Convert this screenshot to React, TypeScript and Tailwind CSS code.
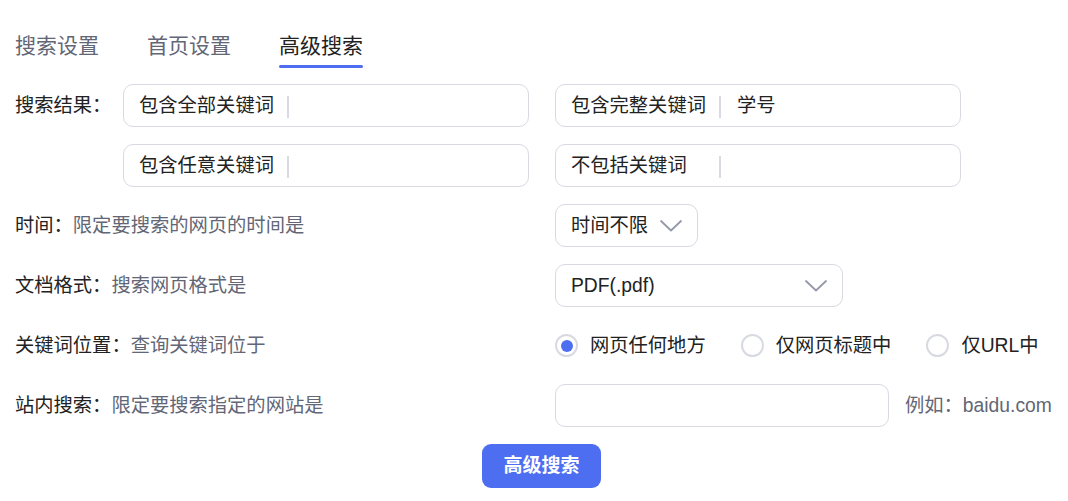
import { useState } from 'react';

const TABS = ['搜索设置', '首页设置', '高级搜索'];

function Chevron() {
  return (
    <svg width="24" height="14" viewBox="0 0 24 14" fill="none" className="shrink-0">
      <path d="M2 2l10 9.5L22 2" stroke="#9599a8" strokeWidth="1.8" strokeLinecap="round" strokeLinejoin="round" />
    </svg>
  );
}

function KeywordInput({ label, value }: { label: string; value?: string }) {
  return (
    <div className="flex h-[43px] items-center rounded-[10px] border border-[#d8dae1] bg-white pl-[15px] pt-[2px]">
      <span className="w-[148px] shrink-0 text-[#222]">{label}</span>
      <span className="h-[22px] w-[2px] shrink-0 bg-[#d8dae1]" />
      <span className="pl-[16px] text-[#222]">{value}</span>
    </div>
  );
}

function Label({ title, desc }: { title: string; desc?: string }) {
  return (
    <div className="col-span-2 flex items-center whitespace-nowrap pt-[2px]">
      <span className="text-[#222]">{title}</span>
      {desc && <span className="text-[#626675]">{desc}</span>}
    </div>
  );
}

function Radio({ label, checked, onClick }: { label: string; checked: boolean; onClick: () => void }) {
  return (
    <button type="button" onClick={onClick} className="flex items-center gap-[12px]">
      <span className="flex h-[23px] w-[23px] items-center justify-center rounded-full border-2 border-[#d8dae1] bg-white">
        {checked && <span className="h-[12px] w-[12px] rounded-full bg-[#4e6ef2]" />}
      </span>
      <span className="pt-[2px] text-[#222]">{label}</span>
    </button>
  );
}

export default function App() {
  const [tab, setTab] = useState(2);
  const [pos, setPos] = useState(0);

  return (
    <div
      className="min-h-screen w-[1068px] bg-white pl-[15px] text-[19.3px]"
      style={{ fontFamily: '"Liberation Sans", "Noto Sans CJK SC", sans-serif' }}
    >
      {/* Tabs */}
      <div className="flex gap-[48px] pt-[31px]">
        {TABS.map((t, i) => (
          <button key={t} type="button" onClick={() => setTab(i)} className="flex flex-col items-stretch">
            <span className={`text-[21px] leading-[30px] ${i === tab ? 'text-[#222]' : 'text-[#626675]'}`}>{t}</span>
            <span className={`mt-[4px] h-[3px] rounded-full ${i === tab ? 'bg-[#4e6ef2]' : 'bg-transparent'}`} />
          </button>
        ))}
      </div>

      {/* Form */}
      <div className="mt-[16px] grid grid-cols-[82px_406px_406px] grid-rows-[repeat(6,43px)] gap-x-[26px] gap-y-[17px]">
        <div className="flex items-center whitespace-nowrap pt-[1px] text-[#222]">搜索结果：</div>
        <KeywordInput label="包含全部关键词" />
        <KeywordInput label="包含完整关键词" value="学号" />

        <div />
        <KeywordInput label="包含任意关键词" />
        <KeywordInput label="不包括关键词" />

        <Label title="时间：" desc="限定要搜索的网页的时间是" />
        <div className="flex">
          <div className="flex h-[43px] w-[143px] items-center justify-between rounded-[10px] border border-[#d8dae1] pl-[15px] pr-[14px] text-[#222]">
            <span className="pt-[2px]">时间不限</span>
            <Chevron />
          </div>
        </div>

        <Label title="文档格式：" desc="搜索网页格式是" />
        <div className="flex">
          <div className="flex h-[43px] w-[288px] items-center justify-between rounded-[10px] border border-[#d8dae1] pl-[15px] pr-[14px] text-[#222]">
            <span className="pt-[2px]">PDF(.pdf)</span>
            <Chevron />
          </div>
        </div>

        <Label title="关键词位置：" desc="查询关键词位于" />
        <div className="flex items-center gap-[35px] whitespace-nowrap">
          {['网页任何地方', '仅网页标题中', '仅URL中'].map((r, i) => (
            <Radio key={r} label={r} checked={pos === i} onClick={() => setPos(i)} />
          ))}
        </div>

        <Label title="站内搜索：" desc="限定要搜索指定的网站是" />
        <div className="flex items-center gap-[16px] whitespace-nowrap">
          <div className="h-[43px] w-[334px] shrink-0 rounded-[10px] border border-[#d8dae1]" />
          <span className="pt-[2px] text-[#626675]">例如：baidu.com</span>
        </div>
      </div>

      <div className="mt-[17px] flex justify-center">
        <button
          type="button"
          className="h-[44px] w-[119px] rounded-[9px] bg-[#4e6ef2] pt-[1px] text-[19px] font-bold text-white"
        >
          高级搜索
        </button>
      </div>
    </div>
  );
}
